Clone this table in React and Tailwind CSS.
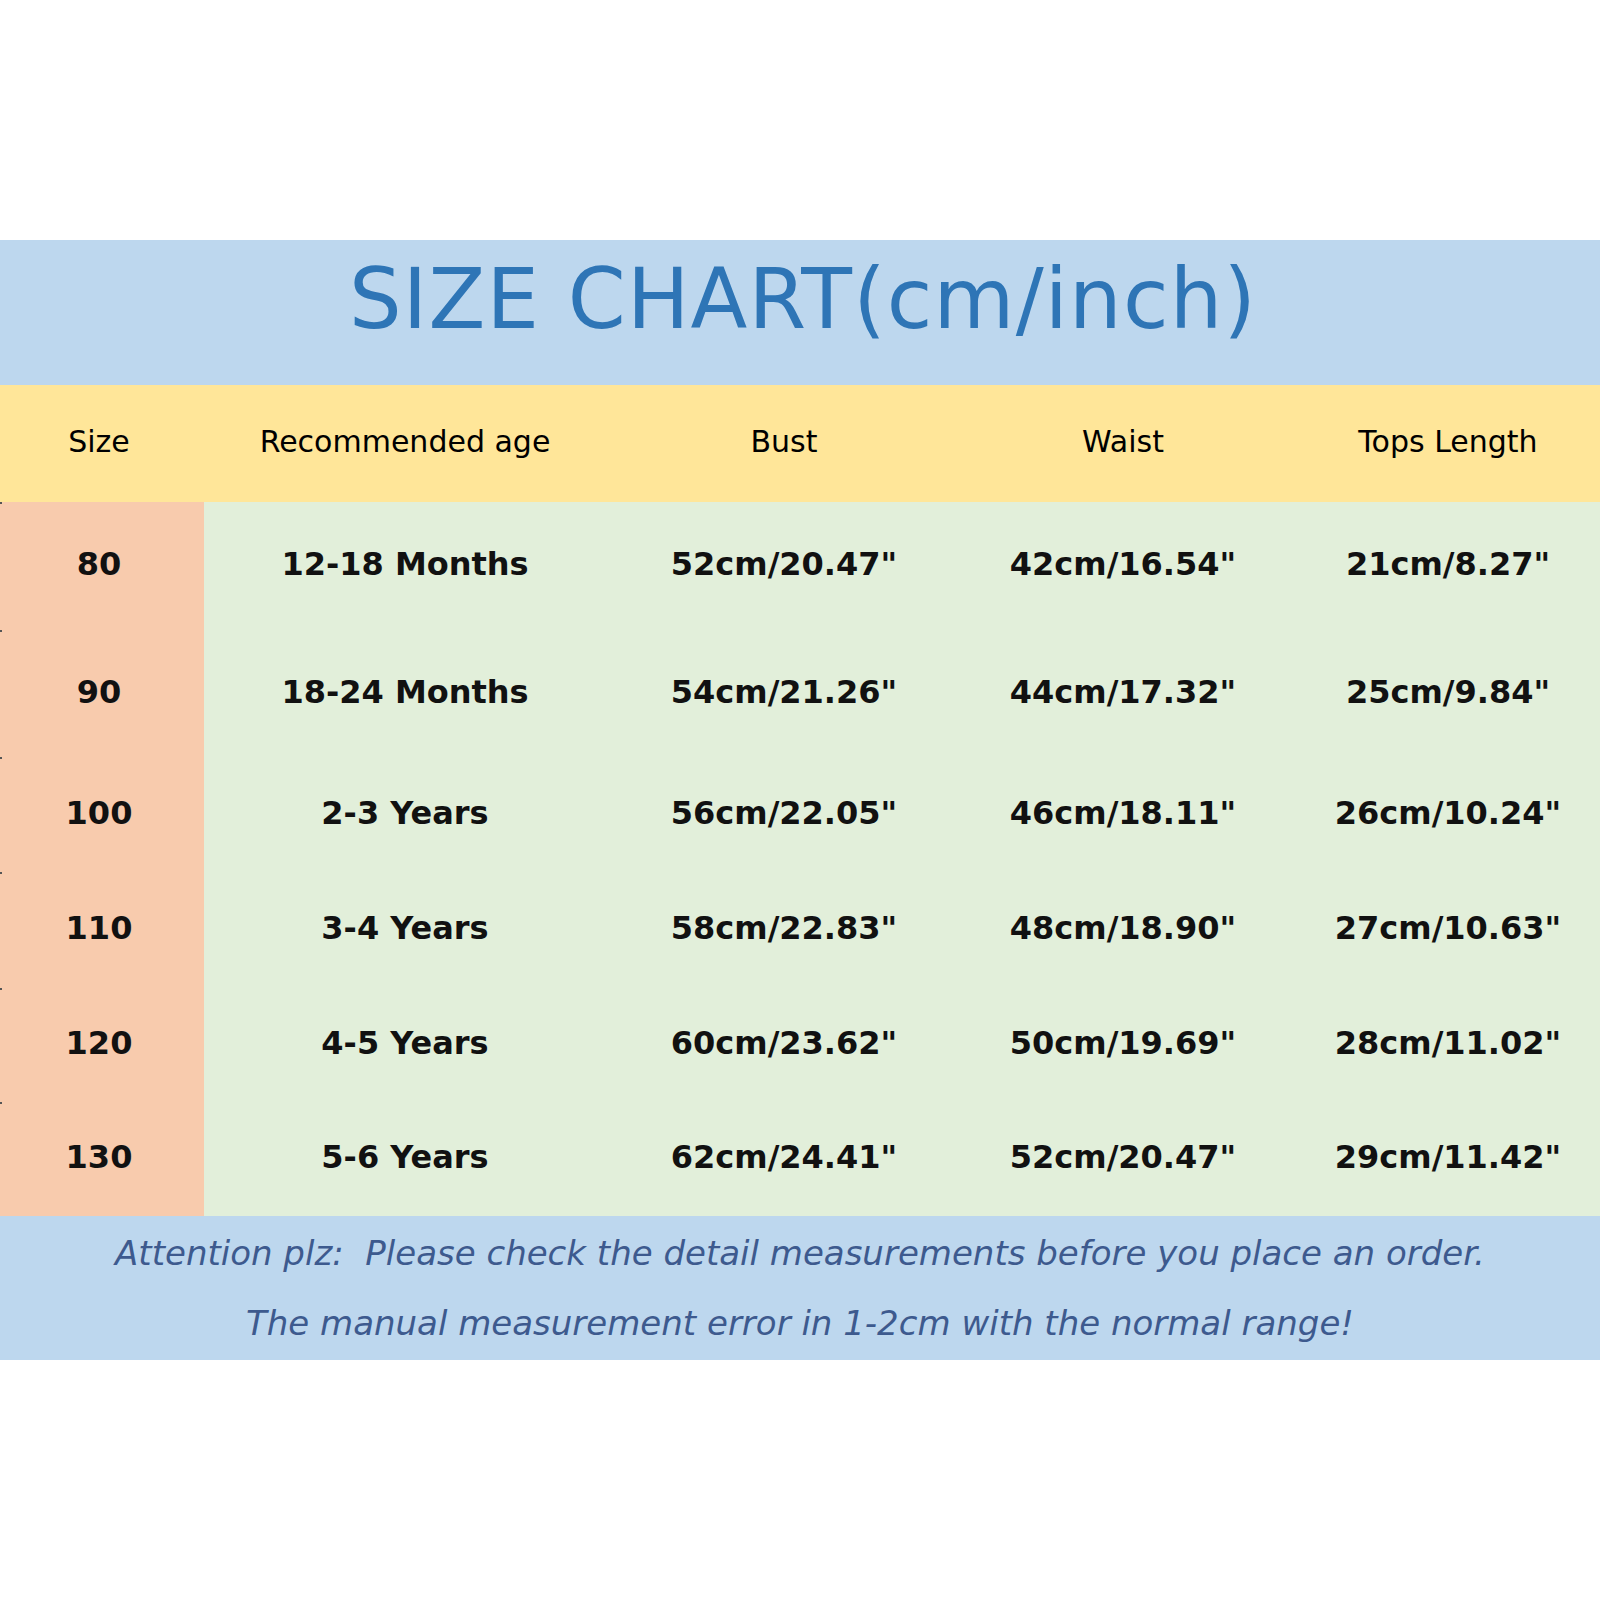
import React from "react";

const rows = [
  { size: "80", age: "12-18 Months", bust: "52cm/20.47\"", waist: "42cm/16.54\"", tops: "21cm/8.27\"", h: "h-[128px]" },
  { size: "90", age: "18-24 Months", bust: "54cm/21.26\"", waist: "44cm/17.32\"", tops: "25cm/9.84\"", h: "h-[127px]" },
  { size: "100", age: "2-3 Years", bust: "56cm/22.05\"", waist: "46cm/18.11\"", tops: "26cm/10.24\"", h: "h-[115px]" },
  { size: "110", age: "3-4 Years", bust: "58cm/22.83\"", waist: "48cm/18.90\"", tops: "27cm/10.63\"", h: "h-[116px]" },
  { size: "120", age: "4-5 Years", bust: "60cm/23.62\"", waist: "50cm/19.69\"", tops: "28cm/11.02\"", h: "h-[114px]" },
  { size: "130", age: "5-6 Years", bust: "62cm/24.41\"", waist: "52cm/20.47\"", tops: "29cm/11.42\"", h: "h-[114px]" },
];

const cols = "grid grid-cols-[204px_402px_356px_322px_1fr]";
const font = "font-['DejaVu_Sans',sans-serif]";

export default function App() {
  return (
    <div className={`w-[1600px] h-[1600px] bg-white ${font}`}>
      <div className="h-[240px]" />

      {/* title */}
      <div className="h-[145px] bg-[#bdd7ee] flex items-center justify-center">
        <h1 className="text-[#2e75b6] text-[83px] leading-none tracking-[1.2px] pb-[26px] pl-[6px]">
          SIZE CHART(cm/inch)
        </h1>
      </div>

      {/* header */}
      <div className={`${cols} h-[117px] bg-[#ffe699] items-center text-[30px] text-black pb-[4px]`}>
        <div className="text-center pr-[6px]">Size</div>
        <div className="text-center">Recommended age</div>
        <div className="text-center">Bust</div>
        <div className="text-center">Waist</div>
        <div className="text-center pl-[12px]">Tops Length</div>
      </div>

      {/* body */}
      <div className="bg-[#e2efda]">
        {rows.map((r) => (
          <div key={r.size} className={`${cols} ${r.h} relative text-[32px] font-bold text-[#111]`}>
            <span className="absolute left-0 top-0 w-[2px] h-[2px] bg-[#555]" />
            <div className="bg-[#f8cbad] flex items-center justify-center pr-[6px] pb-[4px]">{r.size}</div>
            <div className="flex items-center justify-center pb-[4px]">{r.age}</div>
            <div className="flex items-center justify-center pb-[4px]">{r.bust}</div>
            <div className="flex items-center justify-center pb-[4px]">{r.waist}</div>
            <div className="flex items-center justify-center pl-[12px] pb-[4px]">{r.tops}</div>
          </div>
        ))}
      </div>

      {/* footer */}
      <div className="h-[144px] bg-[#bdd7ee] flex flex-col items-center justify-center gap-[36px] text-[#3d5a8e] text-[34px] italic leading-none">
        <p className="whitespace-pre">Attention plz:  Please check the detail measurements before you place an order.</p>
        <p>The manual measurement error in 1-2cm with the normal range!</p>
      </div>
    </div>
  );
}
